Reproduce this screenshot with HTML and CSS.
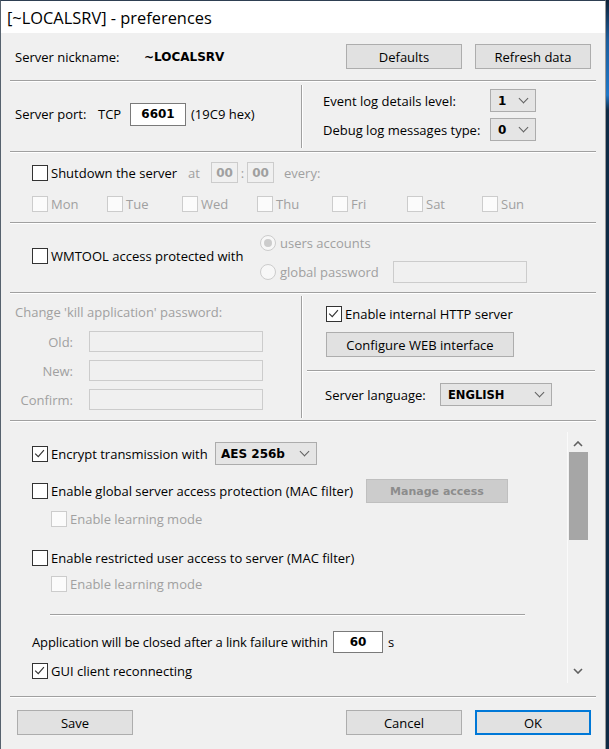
FILE: index.html
```html
<!DOCTYPE html>
<html>
<head>
<meta charset="utf-8">
<link rel="stylesheet" href="styles.css">
</head>
<body>
<div class="window">
  <div class="titlebar">[~LOCALSRV] - preferences</div>

  <div class="sec sec1">
    <span class="nick-label">Server nickname:</span>
    <span class="val">~LOCALSRV</span>
    <button class="btn btn-top btn-first">Defaults</button>
    <button class="btn btn-top">Refresh data</button>
  </div>
  <div class="hr"></div>

  <div class="sec sec2">
    <div class="col-left port-row">
      <span class="port-label">Server port:</span>
      <span class="tcp-label">TCP</span>
      <span class="field field-port val">6601</span>
      <span class="hex">(19C9 hex)</span>
    </div>
    <div class="vr"></div>
    <div class="col-right log-col">
      <div class="log-row">
        <span class="log-label">Event log details level:</span>
        <span class="select select-small"><span class="val">1</span><span class="chev"></span></span>
      </div>
      <div class="log-row">
        <span class="log-label">Debug log messages type:</span>
        <span class="select select-small"><span class="val">0</span><span class="chev"></span></span>
      </div>
    </div>
  </div>
  <div class="hr"></div>

  <div class="sec sec3">
    <div class="shut-row">
      <label class="check shut-check"><span class="cb"></span>Shutdown the server</label>
      <span class="dis at-label">at</span>
      <span class="field field-time val">00</span>
      <span class="dis colon">:</span>
      <span class="field field-time val">00</span>
      <span class="dis every">every:</span>
    </div>
    <div class="days-row">
      <label class="check day dis"><span class="cb cb-dis"></span>Mon</label>
      <label class="check day dis"><span class="cb cb-dis"></span>Tue</label>
      <label class="check day dis"><span class="cb cb-dis"></span>Wed</label>
      <label class="check day dis"><span class="cb cb-dis"></span>Thu</label>
      <label class="check day dis"><span class="cb cb-dis"></span>Fri</label>
      <label class="check day dis"><span class="cb cb-dis"></span>Sat</label>
      <label class="check day dis"><span class="cb cb-dis"></span>Sun</label>
    </div>
  </div>
  <div class="hr"></div>

  <div class="sec sec4">
    <label class="check wm-check"><span class="cb"></span>WMTOOL access protected with</label>
    <div class="radio-col">
      <label class="radio-row dis"><span class="rb rb-on"></span>users accounts</label>
      <div class="radio-row">
        <label class="radio-item dis"><span class="rb"></span>global password</label>
        <span class="field field-pass"></span>
      </div>
    </div>
  </div>
  <div class="hr"></div>

  <div class="sec sec5">
    <div class="col-left kill-col">
      <div class="kill-title dis">Change 'kill application' password:</div>
      <div class="kill-row"><span class="kill-label dis">Old:</span><span class="field field-kill"></span></div>
      <div class="kill-row"><span class="kill-label dis">New:</span><span class="field field-kill"></span></div>
      <div class="kill-row"><span class="kill-label dis">Confirm:</span><span class="field field-kill"></span></div>
    </div>
    <div class="vr vr5"></div>
    <div class="col-right http-col">
      <label class="check http-check"><span class="cb"><svg viewBox="0 0 16 16" width="14" height="14"><path d="M2.5 7.5 L6 11 L12.5 3.5" fill="none" stroke="#333" stroke-width="1.3"/></svg></span>Enable internal HTTP server</label>
      <button class="btn btn-web">Configure WEB interface</button>
      <div class="hr hr-right"></div>
      <div class="lang-row">
        <span class="lang-label">Server language:</span>
        <span class="select select-lang"><span class="val">ENGLISH</span><span class="chev"></span></span>
      </div>
    </div>
  </div>
  <div class="hr"></div>

  <div class="scroll">
    <div class="scroll-content">
      <div class="row enc-row">
        <label class="check enc-check"><span class="cb"><svg viewBox="0 0 16 16" width="14" height="14"><path d="M2.5 7.5 L6 11 L12.5 3.5" fill="none" stroke="#333" stroke-width="1.3"/></svg></span>Encrypt transmission with</label>
        <span class="select select-aes"><span class="val">AES 256b</span><span class="chev"></span></span>
      </div>
      <div class="row glob-row">
        <label class="check glob-check"><span class="cb"></span>Enable global server access protection (MAC filter)</label>
        <button class="btn btn-manage">Manage access</button>
      </div>
      <div class="row learn-row learn1">
        <label class="check dis"><span class="cb cb-dis"></span>Enable learning mode</label>
      </div>
      <div class="row restr-row">
        <label class="check"><span class="cb"></span>Enable restricted user access to server (MAC filter)</label>
      </div>
      <div class="row learn-row learn2">
        <label class="check dis"><span class="cb cb-dis"></span>Enable learning mode</label>
      </div>
      <div class="hr hr-inner"></div>
      <div class="row app-row">
        <span class="app-label">Application will be closed after a link failure within</span>
        <span class="field field-sec val">60</span>
        <span class="sec-unit">s</span>
      </div>
      <div class="row gui-row">
        <label class="check"><span class="cb"><svg viewBox="0 0 16 16" width="14" height="14"><path d="M2.5 7.5 L6 11 L12.5 3.5" fill="none" stroke="#333" stroke-width="1.3"/></svg></span>GUI client reconnecting</label>
      </div>
    </div>
    <div class="scrollbar">
      <svg class="arrow" viewBox="0 0 10 6" width="10" height="6"><path d="M1 5 L5 1 L9 5" fill="none" stroke="#606060" stroke-width="1.6"/></svg>
      <div class="thumb"></div>
      <div class="track-fill"></div>
      <svg class="arrow" viewBox="0 0 10 6" width="10" height="6"><path d="M1 1 L5 5 L9 1" fill="none" stroke="#606060" stroke-width="1.6"/></svg>
    </div>
  </div>
  <div class="hr"></div>

  <div class="footer">
    <button class="btn btn-foot">Save</button>
    <button class="btn btn-foot btn-cancel">Cancel</button>
    <button class="btn btn-foot btn-ok">OK</button>
  </div>
</div>
</body>
</html>
```

FILE: styles.css
```css
* { box-sizing: border-box; }
html, body { margin: 0; padding: 0; }
body {
  width: 609px;
  height: 749px;
  overflow: hidden;
  background: linear-gradient(#0d2238 0, #1c5d9c 40px, #1f78c8 95px, #0e2a45 110px, #0e2a45 100%);
  font-family: "Open Sans", "Noto Sans", sans-serif;
  font-size: 13px;
  color: #000;
  white-space: nowrap;
}
.window {
  width: 606px;
  height: 749px;
  background: #f0f0f0;
  border-top: 1px solid #2e3f52;
  border-left: 1px solid #56626e;
  border-right: 1px solid #9a9a9a;
  display: flex;
  flex-direction: column;
}
.titlebar {
  height: 32px;
  flex: none;
  background: #fff;
  padding-left: 6px;
  display: flex;
  align-items: center;
  font-size: 16.4px;
}
.hr {
  height: 2px;
  flex: none;
  margin: 0 9px;
  border-top: 1px solid #a0a0a0;
  border-bottom: 1px solid #fff;
}
.vr {
  width: 2px;
  flex: none;
  margin: 3px 0;
  border-left: 1px solid #a0a0a0;
  border-right: 1px solid #fff;
}
.sec { flex: none; display: flex; }
.val {
  font-family: "DejaVu Sans", Verdana, sans-serif;
  font-weight: bold;
  font-size: 12px;
}
.dis { color: #a0a0a0; }

/* buttons */
.btn {
  font-family: inherit;
  font-size: 13px;
  color: #000;
  background: #e1e1e1;
  border: 1px solid #adadad;
  padding: 0;
  height: 25px;
  width: 116px;
  display: flex;
  align-items: center;
  justify-content: center;
  white-space: nowrap;
}

/* fields */
.field {
  display: flex;
  align-items: center;
  justify-content: center;
  background: #fff;
  border: 1px solid #7a7a7a;
  flex: none;
}
.select {
  display: flex;
  align-items: center;
  background: #e5e5e5;
  border: 1px solid #acacac;
  height: 23px;
  padding-left: 7px;
  flex: none;
}
.chev {
  margin-left: auto;
  margin-right: 8px;
  width: 7px;
  height: 7px;
  border-right: 1px solid #606060;
  border-bottom: 1px solid #606060;
  transform: translateY(-2px) rotate(45deg);
}

/* checkboxes / radios */
.check { display: flex; align-items: center; white-space: nowrap; }
.cb {
  width: 16px;
  height: 16px;
  flex: none;
  border: 1px solid #333;
  background: #fff;
  margin-right: 3px;
  display: flex;
  align-items: center;
  justify-content: center;
}
.cb-dis { border-color: #cccccc; background: #fbfbfb; }
.rb {
  width: 16px;
  height: 16px;
  flex: none;
  border: 1px solid #cccccc;
  border-radius: 50%;
  background: #f7f7f7;
  margin-right: 4px;
  display: flex;
  align-items: center;
  justify-content: center;
}
.rb-on::after {
  content: "";
  width: 8px;
  height: 8px;
  border-radius: 50%;
  background: #cccccc;
}

/* section 1 */
.sec1 { height: 47px; align-items: center; padding-left: 14px; padding-right: 14px; }
.nick-label { width: 129px; }
.btn-first { margin-left: auto; margin-right: 13px; }

/* section 2 */
.sec2 { height: 69px; }
.col-left { width: 300px; flex: none; }
.col-right { flex: 1; }
.port-row { display: flex; align-items: center; padding-left: 14px; padding-bottom: 5px; }
.port-label { width: 83px; }
.tcp-label { width: 32px; }
.field-port { width: 56px; height: 23px; }
.hex { margin-left: 5px; }
.log-col { padding-top: 7px; padding-left: 20px; display: flex; flex-direction: column; gap: 6px; }
.log-row { display: flex; align-items: center; height: 23px; }
.log-label { width: 167px; }
.select-small { width: 46px; }

/* section 3 */
.sec3 { height: 69px; flex-direction: column; padding-left: 31px; padding-top: 9px; }
.shut-row { display: flex; align-items: center; height: 21px; }
.shut-check { width: 156px; }
.at-label { width: 23px; }
.field-time { width: 27px; height: 21px; background: #f0f0f0; border-color: #cccccc; color: #a0a0a0; }
.colon { width: 9px; text-align: center; }
.every { margin-left: 10px; }
.days-row { display: flex; margin-top: 13px; height: 16px; }
.day { width: 75px; }

/* section 4 */
.sec4 { height: 68px; padding-left: 31px; }
.wm-check { width: 228px; height: 16px; margin-top: 24px; }
.radio-col { display: flex; flex-direction: column; padding-top: 9px; gap: 8px; }
.radio-row { display: flex; align-items: center; height: 20px; }
.radio-row + .radio-row { height: 22px; }
.radio-item { display: flex; align-items: center; width: 133px; }
.field-pass { width: 134px; height: 22px; background: #f0f0f0; border-color: #cccccc; }

/* section 5 */
.sec5 { height: 126px; }
.vr5 { margin: 2px 0; }
.kill-col { padding-left: 14px; padding-top: 8px; display: flex; flex-direction: column; }
.kill-title { height: 20px; display: flex; align-items: center; margin-bottom: 9px; }
.kill-row { display: flex; align-items: center; height: 21px; margin-bottom: 8px; }
.kill-label { width: 58px; text-align: right; margin-right: 16px; }
.field-kill { width: 174px; height: 21px; background: #f0f0f0; border-color: #cccccc; }
.http-col { display: flex; flex-direction: column; padding-top: 12px; }
.http-check { height: 16px; margin-left: 23px; }
.btn-web { width: 188px; height: 25px; margin-left: 23px; margin-top: 10px; }
.hr-right { margin: 13px 10px 0 4px; }
.lang-row { display: flex; align-items: center; margin-top: 11px; margin-left: 22px; height: 23px; }
.lang-label { width: 115px; }
.select-lang { width: 112px; }
.select-lang .val { font-size: 11.5px; }

/* scroll area */
.scroll { flex: none; height: 274px; display: flex; }
.scroll-content { width: 566px; flex: none; padding-left: 31px; padding-top: 20px; display: flex; flex-direction: column; }
.row { display: flex; align-items: center; flex: none; }
.enc-row { height: 23px; }
.enc-check { width: 183px; }
.select-aes { width: 102px; padding-left: 5px; }
.glob-row { height: 24px; margin-top: 14px; }
.glob-check { width: 334px; }
.btn-manage {
  width: 142px;
  height: 24px;
  background: #cccccc;
  border-color: #bfbfbf;
  color: #8c8c8c;
  font-family: "DejaVu Sans", Verdana, sans-serif;
  font-weight: bold;
  font-size: 11px;
}
.learn-row { height: 16px; padding-left: 19px; }
.learn1 { margin-top: 8px; }
.restr-row { height: 16px; margin-top: 23px; }
.learn2 { margin-top: 10px; }
.hr-inner { margin: 22px 0 0 18px; width: 475px; }
.app-row { height: 22px; margin-top: 15px; }
.app-label { width: 301px; letter-spacing: -0.12px; }
.field-sec { width: 50px; height: 22px; }
.sec-unit { margin-left: 5px; }
.gui-row { height: 16px; margin-top: 10px; }

.scrollbar {
  width: 21px;
  flex: none;
  margin-top: 10px;
  height: 251px;
  border-left: 1px solid #fafafa;
  display: flex;
  flex-direction: column;
  align-items: center;
}
.arrow { flex: none; margin-top: 9px; }
.thumb { width: 19px; height: 88px; background: #a6a6a6; margin-top: 5px; flex: none; }
.track-fill { flex: 1; }
.scrollbar .arrow:last-child { margin: 0 0 9px 0; }

/* footer */
.footer { flex: 1; display: flex; padding-top: 12px; padding-left: 16px; }
.btn-cancel { margin-left: auto; margin-right: 13px; }
.btn-ok { margin-right: 14px; border: 2px solid #0078d7; }
```
